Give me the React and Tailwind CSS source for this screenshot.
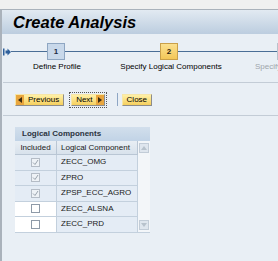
import React from 'react';

const rows = [
  { name: 'ZECC_OMG', checked: true, locked: true },
  { name: 'ZPRO', checked: true, locked: true },
  { name: 'ZPSP_ECC_AGRO', checked: true, locked: true },
  { name: 'ZECC_ALSNA', checked: false, locked: false },
  { name: 'ZECC_PRD', checked: false, locked: false },
];

const CheckBox = ({ checked, locked }) => (
  <div
    className={`w-[9px] h-[9px] border flex items-center justify-center ${
      locked ? 'border-[#b4bcc6] bg-[#eef2f6]' : 'border-[#8e9aa8] bg-white'
    }`}
  >
    {checked && (
      <svg width="7" height="7" viewBox="0 0 7 7">
        <path d="M1 3.5 L3 5.5 L6 1" fill="none" stroke="#9aa4ae" strokeWidth="1" />
      </svg>
    )}
  </div>
);

const StepBox = ({ n, state }) => {
  const cls =
    state === 'done'
      ? 'bg-[#c8d8ea] border-[#8ea6c2] text-[#1c2c44]'
      : state === 'active'
      ? 'bg-gradient-to-b from-[#fbe08e] to-[#f3c757] border-[#c9a04a] text-[#2a2010]'
      : 'bg-[#f2f5f8] border-[#b8c2cc] text-[#9aa4ae]';
  return (
    <div className={`w-[18px] h-[17px] border shrink-0 flex items-center justify-center text-[8px] font-bold ${cls}`}>
      {n}
    </div>
  );
};

const YellowButton = ({ children, focus }) => (
  <div className={focus ? 'border border-dotted border-[#555] p-px' : ''}>
    <div className="h-[12px] flex items-center bg-gradient-to-b from-[#fff1a6] to-[#f5cf5c] border-r border-b border-[#8c8c8c] border-t border-l border-t-[#f6e6a8] border-l-[#f6e6a8] text-[8px] text-black">
      {children}
    </div>
  </div>
);

export default function App() {
  return (
    <div className="w-[278px] h-[261px] overflow-hidden bg-[#f0f0f0] pt-[9px] font-['Liberation_Sans',Arial,sans-serif]">
      <div className="h-[252px] border-t border-l-2 border-[#aab2bb] bg-[#e9eff5] flex flex-col">
        {/* title */}
        <div className="h-[24px] shrink-0 bg-gradient-to-b from-[#e2eaf2] to-[#bccddf] flex items-center pl-[11px]">
          <span className="text-[16.5px] font-bold italic text-black leading-none">Create Analysis</span>
        </div>

        {/* roadmap */}
        <div className="h-[48px] shrink-0 pt-[9px] overflow-hidden">
          <div className="flex items-center h-[17px]">
            <svg width="8" height="8" viewBox="0 0 8 8" className="shrink-0 ml-px">
              <rect x="0" y="0.5" width="1.5" height="7" fill="#2f609c" />
              <path d="M2.5 2.5 H4.5 V0.5 L8 4 L4.5 7.5 V5.5 H2.5 Z" fill="#2f609c" />
            </svg>
            <div className="w-[36px] h-px bg-[#4a6e96] shrink-0" />
            <StepBox n="1" state="done" />
            <div className="w-[95px] h-px bg-[#4a6e96] shrink-0" />
            <StepBox n="2" state="active" />
            <div className="w-[99px] h-px bg-[#4a6e96] shrink-0" />
            <StepBox n="3" state="todo" />
          </div>
          <div className="flex mt-[3px] text-[8px] leading-none whitespace-nowrap">
            <div className="w-[110px] shrink-0 flex justify-center text-black">Define Profile</div>
            <div className="w-[118px] shrink-0 flex justify-center text-black">Specify Logical Components</div>
            <div className="shrink-0 pl-[25px] text-[#a0a6ac]">Specify Scope</div>
          </div>
        </div>

        <div className="h-px bg-[#c3ccd6] shrink-0 ml-px" />

        {/* buttons */}
        <div className="h-[32px] shrink-0 flex items-center pl-[13px] pt-px">
          <YellowButton>
            <div className="w-[8px] h-full bg-[#e9a63e] flex items-center justify-center">
              <svg width="4" height="6" viewBox="0 0 4 6"><path d="M4 0 L0 3 L4 6 Z" fill="#3a2a10" /></svg>
            </div>
            <span className="px-[4px]">Previous</span>
          </YellowButton>
          <div className="ml-[5px]">
            <YellowButton focus>
              <span className="pl-[4px] pr-[3px]">Next</span>
              <div className="w-[8px] h-full bg-[#e9a63e] flex items-center justify-center">
                <svg width="4" height="6" viewBox="0 0 4 6"><path d="M0 0 L4 3 L0 6 Z" fill="#3a2a10" /></svg>
              </div>
            </YellowButton>
          </div>
          <div className="w-px h-[13px] bg-[#8ea6c4] ml-[10px] mr-[4px]" />
          <YellowButton>
            <span className="px-[4px]">Close</span>
          </YellowButton>
        </div>

        <div className="h-px bg-[#c3ccd6] shrink-0 ml-px" />

        {/* table */}
        <div className="pt-[11px] pl-[13px]">
          <div className="w-[135px] text-[8px] text-[#1a1a1a]">
            <div className="h-[14px] bg-gradient-to-b from-[#d2dfec] to-[#c1d3e6] flex items-center pl-[7px] font-bold text-[#2a3340]">
              Logical Components
            </div>
            <div className="flex">
              <div className="w-[123px] shrink-0">
                <div className="flex h-[14px] bg-gradient-to-b from-[#e8eef4] to-[#d8e2ec] border-b border-[#b9c6d4]">
                  <div className="w-[42px] border-r border-[#b9c6d4] flex items-center justify-center">Included</div>
                  <div className="flex-1 flex items-center pl-[4px] border-r border-[#b9c6d4]">Logical Component</div>
                </div>
                {rows.map((r) => (
                  <div key={r.name} className="flex h-[15.5px] border-b border-[#c3d0dd]">
                    <div className={`w-[42px] border-r border-[#c3d0dd] flex items-center justify-center ${r.locked ? 'bg-[#e4ecf5]' : 'bg-white'}`}>
                      <CheckBox checked={r.checked} locked={r.locked} />
                    </div>
                    <div className="flex-1 flex items-center pl-[4px] bg-[#e4ecf5] border-r border-[#c3d0dd]">{r.name}</div>
                  </div>
                ))}
              </div>
              <div className="w-[12px] shrink-0 bg-[#f3f6f9] flex flex-col justify-between pt-[2px] pb-[2px] border-b border-[#c3d0dd]">
                <div className="mx-px h-[10px] bg-[#dfe6ee] border border-[#c2ccd7] flex items-center justify-center">
                  <svg width="6" height="4" viewBox="0 0 6 4"><path d="M0 4 L3 0 L6 4 Z" fill="#b8c2cc" /></svg>
                </div>
                <div className="mx-px h-[10px] bg-[#dfe6ee] border border-[#c2ccd7] flex items-center justify-center">
                  <svg width="6" height="4" viewBox="0 0 6 4"><path d="M0 0 L3 4 L6 0 Z" fill="#b8c2cc" /></svg>
                </div>
              </div>
            </div>
          </div>
        </div>
      </div>
    </div>
  );
}
